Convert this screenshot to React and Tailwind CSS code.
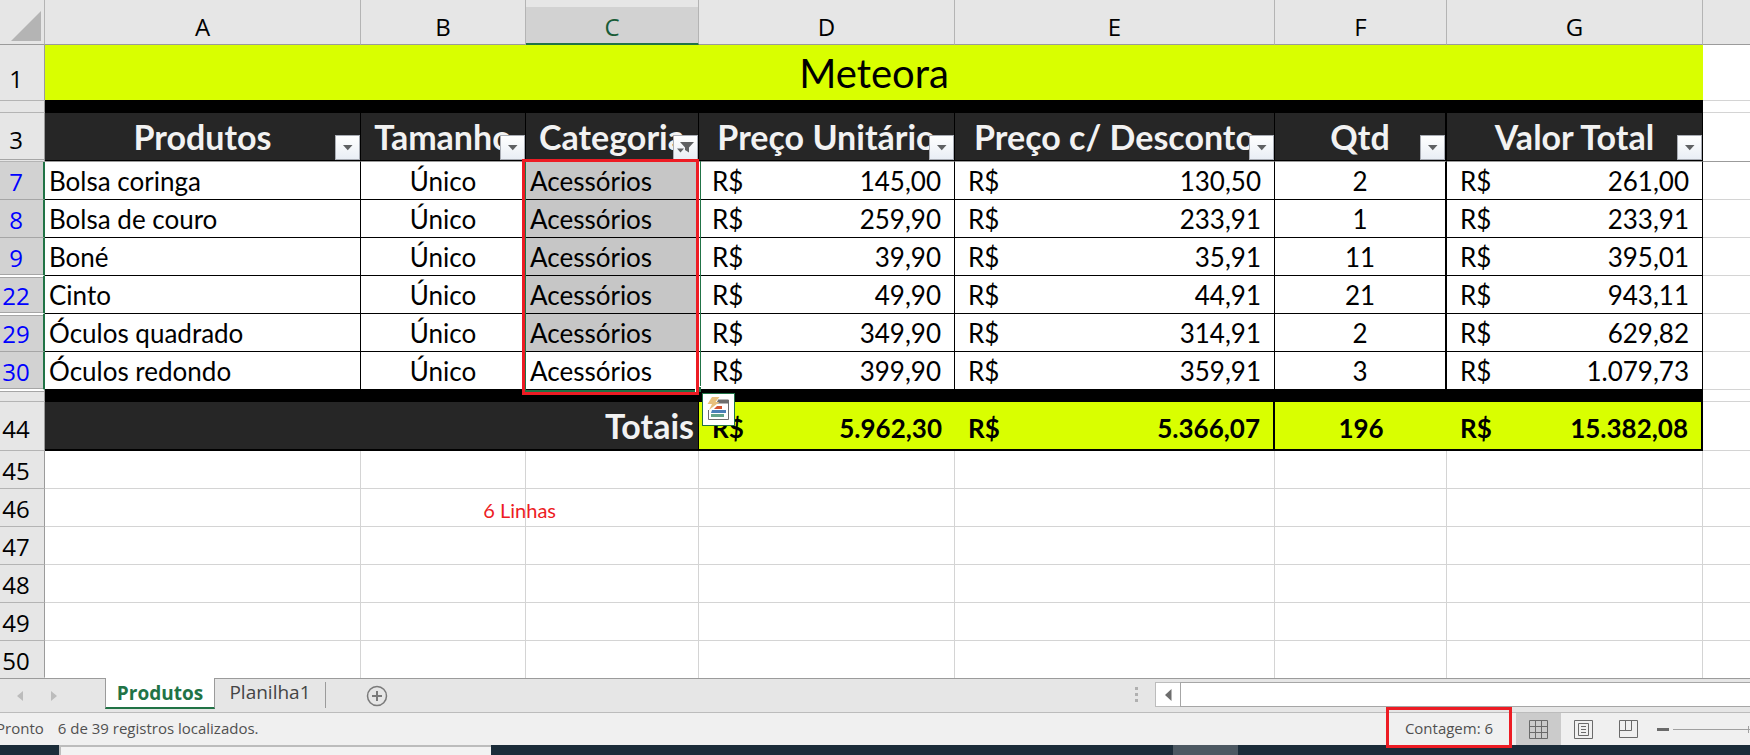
import React from "react";

const products = [
  { row: 7, name: "Bolsa coringa", price: "145,00", discount: "130,50", qty: "2", total: "261,00" },
  { row: 8, name: "Bolsa de couro", price: "259,90", discount: "233,91", qty: "1", total: "233,91" },
  { row: 9, name: "Boné", price: "39,90", discount: "35,91", qty: "11", total: "395,01", gapAfter: true },
  { row: 22, name: "Cinto", price: "49,90", discount: "44,91", qty: "21", total: "943,11", gapBefore: true, gapAfter: true },
  { row: 29, name: "Óculos quadrado", price: "349,90", discount: "314,91", qty: "2", total: "629,82", gapBefore: true },
  { row: 30, name: "Óculos redondo", price: "399,90", discount: "359,91", qty: "3", total: "1.079,73", gapAfter: true },
];

const emptyRows = [45, 46, 47, 48, 49, 50];

const headers = [
  { label: "Produtos", edge: "border-r" },
  { label: "Tamanho", edge: "border-r" },
  { label: "Categoria", edge: "border-r", filtered: true },
  { label: "Preço Unitário", edge: "border-r" },
  { label: "Preço c/ Desconto", edge: "border-r" },
  { label: "Qtd", edge: "border-r-2" },
  { label: "Valor Total", edge: "border-r" },
];

const headShadow = {
  none: "",
  before: "shadow-[inset_0_1px_0_#fff,inset_0_2px_0_#a6a6a6]",
  after: "shadow-[inset_0_-1px_0_#a6a6a6]",
  both: "shadow-[inset_0_1px_0_#fff,inset_0_2px_0_#a6a6a6,inset_0_-1px_0_#a6a6a6]",
};

function gapKind({ gapBefore, gapAfter }) {
  if (gapBefore && gapAfter) return "both";
  if (gapBefore) return "before";
  return gapAfter ? "after" : "none";
}

function RowHead({ children, className = "" }) {
  return (
    <th
      scope="row"
      className={`border-r border-b border-r-[#9b9b9b] border-b-[#b4b4b4] bg-[#e6e6e6] pr-3 text-center align-bottom font-['Open_Sans',sans-serif] text-2xl leading-7 font-normal ${className}`}
    >
      {children}
    </th>
  );
}

function Money({ value, className = "" }) {
  return (
    <td className={`border-black px-[13px] ${className}`}>
      <div className="flex justify-between">
        <span>R$</span>
        <span>{value}</span>
      </div>
    </td>
  );
}

function FilterButton({ label, filtered }) {
  return (
    <button
      type="button"
      aria-label={`Filtrar ${label}`}
      className="absolute right-0 bottom-px flex size-[25px] items-center justify-center border border-[#a9adb5] bg-linear-to-b from-white to-[#e9eef5]"
    >
      {filtered ? (
        <svg width="19" height="15" viewBox="0 0 19 15" fill="#5f6163">
          <path d="M4 2h14l-5 5.500v5l-4-2.500v-2.500z" />
          <path d="M1 8.500h7l-3.500 4z" />
        </svg>
      ) : (
        <svg width="10" height="6" viewBox="0 0 10 6" fill="#5f6163">
          <path d="M0 0h9.500l-4.750 5.300z" />
        </svg>
      )}
    </button>
  );
}

function QuickAnalysisIcon() {
  return (
    <svg width="29" height="29" viewBox="0 0 29 29">
      <path d="M14 5H24.500V24.500H4.500V15" fill="none" stroke="#6d6d6d" />
      <path d="M14 5h11v3.500H12z" fill="#6d6d6d" />
      <path d="M8 2h7.500l-4 5h4L5 15l3-6H3.500z" fill="#e8c07c" />
      <path d="M13 11h5v3h-8z" fill="#d35230" />
      <path d="M8 15h14v3H7z" fill="#4a7fb8" />
      <path d="M7 19h13v3H7z" fill="#63a38a" />
    </svg>
  );
}

function SelectionOverlay() {
  return (
    <>
      <div className="pointer-events-none absolute -top-px -left-px z-10 h-[231px] w-[176px] border-x border-b-2 border-[#217346]">
        <div className="absolute -right-px -bottom-[2px] size-1.5 border-t border-l border-white bg-[#217346]" />
      </div>
      <div className="pointer-events-none absolute -top-[3px] -left-1 z-20 h-[236px] w-[177px] border-[3px] border-[#ed1c24]" />
      <button
        type="button"
        aria-label="Análise Rápida"
        className="absolute top-[231px] left-[176px] z-10 flex size-[33px] items-center justify-center border border-[#217346] bg-white"
      >
        <QuickAnalysisIcon />
      </button>
    </>
  );
}

function Sheet() {
  const colHead = "border-r border-b border-r-[#b4b4b4] border-b-[#9b9b9b]";
  const grid = "border-[#d4d4d4]";
  return (
    <table className="w-full table-fixed border-separate border-spacing-0 bg-white font-[Lato,sans-serif] text-[26px] leading-7 text-black">
      <colgroup>
        <col className="w-[45px]" />
        <col className="w-[316px]" />
        <col className="w-[165px]" />
        <col className="w-[173px]" />
        <col className="w-[256px]" />
        <col className="w-[320px]" />
        <col className="w-[172px]" />
        <col className="w-[256px]" />
        <col />
      </colgroup>
      <thead>
        <tr className="h-[45px] bg-[#e6e6e6] font-['Open_Sans',sans-serif] text-2xl leading-7">
          <th className={`relative p-0 ${colHead}`}>
            <button type="button" aria-label="Selecionar tudo" className="absolute right-[3px] bottom-[3px]">
              <svg width="30" height="30" viewBox="0 0 30 30" fill="#b4b4b4">
                <path d="M30 0v30H0z" />
              </svg>
            </button>
          </th>
          {["A", "B", "C", "D", "E", "F", "G"].map((c) => (
            <th
              key={c}
              scope="col"
              className={
                c === "C"
                  ? "border-r border-b-2 border-r-[#b4b4b4] border-b-[#217346] bg-[linear-gradient(#e6e6e6_7px,#d2d2d2_7px)] pb-0.5 align-bottom font-normal text-[#185c37]"
                  : `pb-[3px] align-bottom font-normal ${colHead}`
              }
            >
              {c}
            </th>
          ))}
          <th className="border-b border-b-[#9b9b9b]" />
        </tr>
      </thead>
      <tbody>
        <tr className="h-14">
          <RowHead className="pb-[7px]">1</RowHead>
          <td colSpan={7} className="border-b border-black bg-[#d9ff00] p-0 text-center text-[40px] leading-10">
            Meteora
          </td>
          <td className={`border-b ${grid}`} />
        </tr>
        <tr className="h-3">
          <th className="border-r border-b border-r-[#9b9b9b] border-b-[#b4b4b4] bg-[#e6e6e6] p-0" />
          <td colSpan={7} className="bg-black p-0" />
          <td className={`border-b p-0 ${grid}`} />
        </tr>
        <tr className="h-[49px]">
          <RowHead className="pb-[7px] shadow-[inset_0_-1px_0_#e6e6e6,inset_0_-2px_0_#a6a6a6]">3</RowHead>
          {headers.map((h) => (
            <th
              key={h.label}
              scope="col"
              className={`relative border-b border-r-black border-b-[#9b9b9b] bg-[#262626] p-0 text-center text-[34px] leading-10 font-bold whitespace-nowrap text-[#f2f2f2] shadow-[inset_0_-1px_0_#000] ${h.edge}`}
            >
              {h.label}
              <FilterButton label={h.label} filtered={h.filtered} />
            </th>
          ))}
          <td className="border-b border-[#9b9b9b]" />
        </tr>
        {products.map((p, i) => {
          const last = i === products.length - 1;
          return (
            <tr key={p.row} className="h-[38px]">
              <th
                scope="row"
                className={`border-r-2 border-b border-r-[#217346] bg-[#d2d2d2] pr-[11px] pb-[3px] text-center align-bottom font-['Open_Sans',sans-serif] text-2xl leading-7 font-normal text-[#0000ff] ${p.gapAfter ? "border-b-white" : "border-b-[#a6a6a6]"} ${headShadow[gapKind(p)]}`}
              >
                {p.row}
              </th>
              <td className="border-r border-b border-black pl-1">{p.name}</td>
              <td className="border-r border-b border-black text-center">Único</td>
              <td className={`relative border-r border-b border-black pl-1 ${last ? "" : "bg-[#c6c6c6]"}`}>
                Acessórios
                {i === 0 && <SelectionOverlay />}
              </td>
              <Money value={p.price} className="border-r border-b" />
              <Money value={p.discount} className="border-r border-b" />
              <td className="border-r-2 border-b border-black text-center">{p.qty}</td>
              <Money value={p.total} className="border-r border-b" />
              <td className={`border-b ${grid}`} />
            </tr>
          );
        })}
        <tr className="h-3">
          <th className="border-r border-b border-r-[#9b9b9b] border-b-[#b4b4b4] bg-[#e6e6e6] p-0 shadow-[inset_0_1px_0_#fff,inset_0_2px_0_#a6a6a6]" />
          <td colSpan={7} className="bg-black p-0" />
          <td className={`border-b p-0 ${grid}`} />
        </tr>
        <tr className="h-[49px] font-bold">
          <RowHead className="pb-[7px]">44</RowHead>
          <td
            colSpan={3}
            className="border-r border-b-2 border-black bg-[#262626] p-0 pr-1 text-right text-[34px] leading-10 text-[#f2f2f2]"
          >
            Totais
          </td>
          <Money value="5.962,30" className="border-b-2 bg-[#d9ff00] pt-1" />
          <Money value="5.366,07" className="border-r-2 border-b-2 bg-[#d9ff00] pt-1" />
          <td className="border-b-2 border-black bg-[#d9ff00] pt-1 text-center">196</td>
          <Money value="15.382,08" className="border-r-2 border-b-2 bg-[#d9ff00] pt-1" />
          <td className={`border-b ${grid}`} />
        </tr>
        {emptyRows.map((n) => (
          <tr key={n} className={n === 50 ? "h-[37px]" : "h-[38px]"}>
            <RowHead className={n === 50 ? "border-b-transparent pb-0.5" : "pb-[3px]"}>{n}</RowHead>
            {["A", "B", "C", "D", "E", "F", "G"].map((c) => (
              <td key={c} className={`relative border-r p-0 ${n === 50 ? "" : "border-b"} ${grid}`}>
                {n === 46 && c === "B" && (
                  <span className="absolute -right-[31px] bottom-1 z-10 text-xl leading-6 whitespace-nowrap text-[#ed1c24]">
                    6 Linhas
                  </span>
                )}
              </td>
            ))}
            <td className={`${n === 50 ? "" : "border-b"} ${grid}`} />
          </tr>
        ))}
      </tbody>
    </table>
  );
}

function TabBar() {
  return (
    <div className="flex h-[34px] items-start bg-[#e6e6e6] text-[19px] leading-6 text-[#444]">
      <div className="flex h-full w-[105px] items-center gap-7 border-t border-[#9b9b9b] pl-[17px] text-[#bcbcbc]">
        <button type="button" aria-label="Planilha anterior">
          <svg width="6" height="10" viewBox="0 0 6 10" fill="currentColor"><path d="M6 0v10L0 5z" /></svg>
        </button>
        <button type="button" aria-label="Próxima planilha">
          <svg width="6" height="10" viewBox="0 0 6 10" fill="currentColor"><path d="M0 0v10l6-5z" /></svg>
        </button>
      </div>
      <button
        type="button"
        className="h-[31px] w-[110px] border-x border-b-2 border-x-[#9b9b9b] border-b-[#217346] bg-white font-bold text-[#217346]"
      >
        Produtos
      </button>
      <div className="flex h-full flex-1 items-start border-t border-[#9b9b9b] pt-[3px]">
        <button
          type="button"
          className="flex h-[26px] w-[111px] items-start justify-center border-r border-[#9b9b9b] leading-5"
        >
          Planilha1
        </button>
        <button type="button" aria-label="Nova planilha" className="ml-10 pt-[3px]">
          <svg width="22" height="22" viewBox="0 0 22 22" fill="none" stroke="#7a7a7a">
            <circle cx="11" cy="11" r="9.500" strokeWidth="1.500" />
            <path d="M11 6v10M6 11h10" strokeWidth="2" />
          </svg>
        </button>
        <div className="mt-[5px] mr-[17px] ml-auto flex flex-col gap-[3px]">
          <span className="size-[3px] bg-[#b0b0b0]" />
          <span className="size-[3px] bg-[#b0b0b0]" />
          <span className="size-[3px] bg-[#b0b0b0]" />
        </div>
      </div>
      <div className="flex h-full w-[34%] border-t border-[#9b9b9b] pt-[3px]">
        <button
          type="button"
          aria-label="Rolar para a esquerda"
          className="flex h-[25px] w-[25px] items-center justify-center border border-r-0 border-[#bcbcbc] bg-white"
        >
          <svg width="7" height="12" viewBox="0 0 7 12" fill="#6d6d6d"><path d="M6.500 0v12L0 6z" /></svg>
        </button>
        <div className="h-[25px] flex-1 border border-r-0 border-[#a6a6a6] bg-white" />
      </div>
    </div>
  );
}

function StatusBar() {
  return (
    <div className="flex h-[33px] items-center border-t border-[#bcbcbc] bg-[#f0f0f0] text-[15px] leading-5 text-[#505050]">
      <span className="-ml-1 pb-0.5">Pronto</span>
      <span className="ml-3.5 pb-0.5">6 de 39 registros localizados.</span>
      <div className="relative ml-auto flex h-full w-[126px] items-center justify-center pb-0.5">
        Contagem: 6
        <div className="pointer-events-none absolute inset-x-0 -top-[6px] h-[41px] border-[3px] border-[#ed1c24]" />
      </div>
      <button type="button" aria-label="Normal" className="ml-1 flex h-full w-[45px] items-center justify-center bg-[#cbcbcb]">
        <svg width="19" height="19" viewBox="0 0 19 19" fill="none" stroke="#6a6a6a">
          <path d="M.5.5h18v18H.5zM6.500.5v18M12.500.5v18M.5 6.500h18M.5 12.500h18" />
        </svg>
      </button>
      <button type="button" aria-label="Layout da Página" className="flex h-full w-[45px] items-center justify-center">
        <svg width="19" height="19" viewBox="0 0 19 19" fill="none" stroke="#6a6a6a">
          <path d="M.5.5h18v18H.5zM4.500 3.500h10v12h-10zM7 6.500h5M7 9.500h5M7 12.500h5" />
        </svg>
      </button>
      <button type="button" aria-label="Visualização da Quebra de Página" className="flex h-full w-[45px] items-center justify-center">
        <svg width="19" height="19" viewBox="0 0 19 19" fill="none" stroke="#6a6a6a">
          <path d="M.5.5h18v17H.5zM.5 10.500h12v-10M6.500.5v10" />
        </svg>
      </button>
      <button type="button" aria-label="Reduzir" className="ml-[6px] flex h-full w-3 items-center">
        <span className="h-[3px] w-full bg-[#6a6a6a]" />
      </button>
      <div className="ml-1 flex w-[77px] items-center">
        <input
          type="range"
          aria-label="Zoom"
          defaultValue="100"
          className="h-px min-w-0 flex-1 appearance-none bg-[#a0a0a0] [&::-webkit-slider-thumb]:appearance-none"
        />
        <span className="h-[7px] w-px bg-[#a0a0a0]" />
        <span className="h-px w-px bg-[#a0a0a0]" />
      </div>
    </div>
  );
}

function Taskbar() {
  return (
    <div className="flex h-2.5 bg-[#1b2c39]">
      <div className="ml-[59px] w-[432px] border-t-2 border-l-2 border-[#bcbcbc] bg-[#f2f2f2]" />
      <div className="ml-[682px] w-[65px] bg-[#4c5862]" />
    </div>
  );
}

export default function App() {
  return (
    <div className="flex min-h-screen flex-col overflow-hidden bg-white">
      <main className="flex-1">
        <Sheet />
      </main>
      <footer className="font-['Open_Sans',sans-serif]">
        <TabBar />
        <StatusBar />
        <Taskbar />
      </footer>
    </div>
  );
}
